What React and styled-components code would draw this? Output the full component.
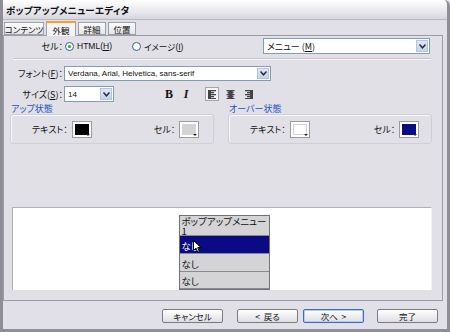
import React from 'react';
import styled, { createGlobalStyle } from 'styled-components';

const GlobalStyle = createGlobalStyle`
  html, body { margin: 0; padding: 0; background: #e1e0e4; }
  body {
    font-family: "Noto Sans CJK JP", "Liberation Sans", sans-serif;
    font-size: 9px;
    font-feature-settings: "palt";
    color: #111;
  }
`;

const Window = styled.div`
  width: 450px;
  height: 332px;
  box-sizing: border-box;
  display: flex;
  flex-direction: column;
  background: #e1e0e6;
  border-left: 3px solid #8e8e96;
  border-right: 3px solid #8e8e96;
  border-bottom: 3px solid #8e8e96;
  border-top-right-radius: 6px;
  overflow: hidden;
`;

const TitleBar = styled.div`
  height: 19px;
  margin: 0 -3px;
  padding-left: 6px;
  display: flex;
  align-items: center;
  font-weight: bold;
  font-size: 9.5px;
  letter-spacing: 0.2px;
  background: linear-gradient(#ffffff, #e4e4ea 70%, #d6d6dc);
  border-bottom: 1px solid #b8b8c0;
  border-top-right-radius: 6px;
`;

const TabRow = styled.div`
  display: flex;
  align-items: flex-end;
  height: 15px;
  padding-left: 1px;
  gap: 2px;
`;

const Tab = styled.div`
  height: ${p => (p.$active ? 15 : 13)}px;
  width: ${p => p.$w}px;
  box-sizing: border-box;
  display: flex;
  align-items: center;
  justify-content: center;
  white-space: nowrap;
  font-size: 8.5px;
  border: 1px solid #a0a0a8;
  border-bottom: ${p => (p.$active ? 'none' : '1px solid #a0a0a8')};
  border-top: ${p => (p.$active ? '2px solid #f2a030' : '1px solid #a0a0a8')};
  background: ${p => (p.$active ? '#f4f4f6' : 'linear-gradient(#fbfbfc, #e6e6ea)')};
  margin-bottom: ${p => (p.$active ? -1 : 0)}px;
  position: relative;
`;

const Panel = styled.div`
  flex: none;
  height: 266px;
  margin-right: 4px;
  box-sizing: border-box;
  border: 1px solid #9c9ca4;
  background: #e1e0e6;
  display: flex;
  flex-direction: column;
`;

const FieldRow = styled.div`
  display: flex;
  align-items: center;
  height: ${p => p.$h}px;
  margin-top: ${p => p.$mt || 0}px;
  padding-right: 12px;
`;

const Label = styled.span`
  width: 59px;
  flex: none;
  text-align: right;
  white-space: nowrap;
  margin-right: 1px;
`;

const Radio = styled.span`
  width: 9px;
  height: 9px;
  box-sizing: border-box;
  border-radius: 50%;
  border: 1px solid #2e5f9e;
  background: #fff;
  display: inline-flex;
  align-items: center;
  justify-content: center;
  margin-left: ${p => p.$ml || 0}px;
  margin-right: 3px;
  &::after {
    content: '';
    width: 3px;
    height: 3px;
    border-radius: 50%;
    background: ${p => (p.$on ? '#2aa02a' : 'transparent')};
  }
`;

const RadioText = styled.span`
  font-family: "Liberation Sans", "Noto Sans CJK JP", sans-serif;
  font-size: 8.5px;
  margin-right: ${p => p.$mr || 0}px;
`;

const Select = styled.div`
  width: ${p => p.$w}px;
  height: ${p => p.$h || 15}px;
  margin-left: ${p => p.$ml || 0}px;
  box-sizing: border-box;
  border: 1px solid #7f9db9;
  background: #fff;
  display: flex;
  align-items: center;
  padding: 1px 1px 1px 3px;
  font-family: ${p => (p.$latin ? '"Liberation Sans", sans-serif' : 'inherit')};
  font-size: ${p => (p.$latin ? '8px' : '9px')};
  span { flex: 1; white-space: nowrap; overflow: hidden; }
`;

const DropButton = styled.div`
  width: 12px;
  height: 100%;
  box-sizing: border-box;
  border: 1px solid #b4c4dc;
  background: linear-gradient(#dfe7f3, #c6d3e8);
  display: flex;
  align-items: center;
  justify-content: center;
`;

const Separator = styled.div`
  height: 0;
  margin: 3px 11px 0 10px;
  border-top: 1px solid #c4c4cc;
  border-bottom: 1px solid #f8f8fa;
`;

const StyleButton = styled.div`
  width: 14px;
  height: 14px;
  margin-left: ${p => p.$ml || 0}px;
  display: flex;
  align-items: center;
  justify-content: center;
  font-family: "Liberation Serif", serif;
  font-size: 12px;
  font-weight: bold;
  font-style: ${p => (p.$italic ? 'italic' : 'normal')};
`;

const AlignButton = styled.div`
  width: 14px;
  height: 14px;
  margin-left: ${p => p.$ml || 0}px;
  box-sizing: border-box;
  display: flex;
  align-items: center;
  justify-content: center;
  border: 1px solid ${p => (p.$pressed ? '#a4a4ac' : 'transparent')};
  background: ${p => (p.$pressed ? '#f4f4f6' : 'transparent')};
`;

const Groups = styled.div`
  display: flex;
  gap: 14px;
  padding: 0 10px 0 6px;
  margin-top: 2px;
`;

const Group = styled.div`
  flex: 1;
  display: flex;
  flex-direction: column;
`;

const Legend = styled.div`
  color: #1a56c4;
  height: 10px;
  line-height: 10px;
  padding-left: 1px;
`;

const GroupBox = styled.div`
  height: 30px;
  box-sizing: border-box;
  border: 1px solid #cfcfd6;
  border-radius: 3px;
  box-shadow: inset 1px 1px 0 #f8f8fa;
  display: flex;
  align-items: center;
  padding-left: ${p => p.$pl}px;
`;

const SwatchLabel = styled.span`
  white-space: nowrap;
  margin-left: ${p => p.$ml || 0}px;
  margin-right: 4px;
`;

const Swatch = styled.div`
  width: 20px;
  height: 17px;
  box-sizing: border-box;
  border: 1px solid #9a9aa2;
  padding: 2px;
  background: #fff;
  position: relative;
  &::before {
    content: '';
    display: block;
    width: 100%;
    height: 100%;
    background: ${p => p.$color};
    box-sizing: border-box;
    border: ${p => (p.$color === '#ffffff' ? '1px solid #d0d0d0' : 'none')};
  }
  &::after {
    content: '';
    position: absolute;
    right: 1px;
    bottom: 1px;
    border-left: 2px solid transparent;
    border-right: 2px solid transparent;
    border-top: 2px solid #222;
  }
`;

const Spacer = styled.div`
  flex: 1;
`;

const Preview = styled.div`
  height: 83px;
  margin: 0 10px 10px 8px;
  box-sizing: border-box;
  background: #fff;
  border-top: 1px solid #b0b0b8;
  border-left: 1px solid #b0b0b8;
  border-right: 1px solid #f4f4f6;
  display: flex;
  justify-content: center;
  padding: 7px 0 0 4px;
`;

const Menu = styled.div`
  width: 91px;
  height: 75px;
  box-sizing: border-box;
  border: 1px solid #707078;
  background: #d4d4d6;
  display: flex;
  flex-direction: column;
  position: relative;
`;

const MenuItem = styled.div`
  height: ${p => p.$h}px;
  box-sizing: border-box;
  padding: ${p => (p.$top ? '0' : '2px')} 2px 0;
  line-height: 10px;
  font-size: 9.5px;
  color: ${p => (p.$hot ? '#fff' : '#111')};
  background: ${p => (p.$hot ? '#0a0a84' : 'transparent')};
  border-bottom: 1px solid #8a8a90;
  display: flex;
  align-items: ${p => (p.$top ? 'flex-start' : 'center')};
  word-break: break-all;
  &:last-child { border-bottom: none; }
`;

const Cursor = styled.svg`
  position: absolute;
  left: 13px;
  top: 24px;
`;

const Footer = styled.div`
  flex: 1;
  display: flex;
  justify-content: flex-end;
  align-items: center;
  padding: 1px 9px 0 0;
  gap: 5px;
`;

const Button = styled.div`
  width: 61px;
  height: 14px;
  margin-left: ${p => p.$ml || 0}px;
  box-sizing: border-box;
  border: 1px solid ${p => (p.$focus ? '#3a68c8' : '#7a7a82')};
  border-radius: 2px;
  background: linear-gradient(#ffffff, #ececf0 60%, #dcdce2);
  box-shadow: ${p => (p.$focus ? 'inset 0 0 0 1px #b8cdf2' : 'none')};
  display: flex;
  align-items: center;
  justify-content: center;
  font-size: 8.5px;
  white-space: pre;
`;

const Chevron = () => (
  <svg width="7" height="5" viewBox="0 0 7 5">
    <path d="M0.5 0.5 L3.5 3.8 L6.5 0.5" fill="none" stroke="#2a2a44" strokeWidth="1.5" />
  </svg>
);

const AlignIcon = ({ mode }) => {
  const rows = [0, 2, 4, 6, 8];
  const widths = [8, 6, 8, 6, 8];
  return (
    <svg width="9" height="9" viewBox="0 0 9 9">
      {rows.map((y, i) => {
        const w = widths[i];
        const x = mode === 'left' ? 0 : mode === 'center' ? (9 - w) / 2 : 9 - w;
        return <rect key={y} x={x} y={y} width={w} height="1.3" fill="#444" />;
      })}
      {mode === 'left' && <rect x="0" y="0" width="3" height="9" fill="#444" />}
      {mode === 'right' && <rect x="6" y="0" width="3" height="9" fill="#444" />}
      {mode === 'center' && <rect x="2.5" y="1" width="4" height="7" fill="#444" />}
    </svg>
  );
};

const App = () => {
  return (
    <>
      <GlobalStyle />
      <Window>
        <TitleBar>ポップアップメニューエディタ</TitleBar>
        <TabRow>
          <Tab $w={40}>コンテンツ</Tab>
          <Tab $w={30} $active>外観</Tab>
          <Tab $w={28}>詳細</Tab>
          <Tab $w={28}>位置</Tab>
        </TabRow>
        <Panel>
          <FieldRow $h={18} $mt={1}>
            <Label>セル：</Label>
            <Radio $ml={1} $on />
            <RadioText $mr={20}>HTML(<u>H</u>)</RadioText>
            <Radio />
            <RadioText>イメージ(<u>I</u>)</RadioText>
            <Spacer />
            <Select $w={167} $h={16}>
              <span>メニュー (<u>M</u>)</span>
              <DropButton><Chevron /></DropButton>
            </Select>
          </FieldRow>
          <Separator />
          <FieldRow $h={15} $mt={6}>
            <Label>フォント(<u>F</u>)：</Label>
            <Select $w={207} $latin>
              <span>Verdana, Arial, Helvetica, sans-serif</span>
              <DropButton><Chevron /></DropButton>
            </Select>
          </FieldRow>
          <FieldRow $h={16} $mt={5}>
            <Label>サイズ(<u>S</u>)：</Label>
            <Select $w={50} $h={16} $latin>
              <span>14</span>
              <DropButton><Chevron /></DropButton>
            </Select>
            <StyleButton $ml={48}>B</StyleButton>
            <StyleButton $ml={3} $italic>I</StyleButton>
            <AlignButton $ml={12} $pressed><AlignIcon mode="left" /></AlignButton>
            <AlignButton $ml={4}><AlignIcon mode="center" /></AlignButton>
            <AlignButton $ml={4}><AlignIcon mode="right" /></AlignButton>
          </FieldRow>
          <Groups>
            <Group>
              <Legend>アップ状態</Legend>
              <GroupBox $pl={21}>
                <SwatchLabel>テキスト：</SwatchLabel>
                <Swatch $color="#000000" />
                <SwatchLabel $ml={62}>セル：</SwatchLabel>
                <Swatch $color="#d4d4d4" />
              </GroupBox>
            </Group>
            <Group>
              <Legend>オーバー状態</Legend>
              <GroupBox $pl={21}>
                <SwatchLabel>テキスト：</SwatchLabel>
                <Swatch $color="#ffffff" />
                <SwatchLabel $ml={64}>セル：</SwatchLabel>
                <Swatch $color="#0a0a84" />
              </GroupBox>
            </Group>
          </Groups>
          <Spacer />
          <Preview>
            <Menu>
              <MenuItem $h={20} $top>ポップアップメニュー1</MenuItem>
              <MenuItem $h={18} $hot>なし</MenuItem>
              <MenuItem $h={18}>なし</MenuItem>
              <MenuItem $h={17}>なし</MenuItem>
              <Cursor width="9" height="13" viewBox="0 0 9 13">
                <path d="M0.5 0.5 L0.5 10.5 L3 8.2 L4.8 12.2 L6.4 11.5 L4.7 7.6 L8 7.6 Z" fill="#fff" stroke="#000" strokeWidth="1" />
              </Cursor>
            </Menu>
          </Preview>
        </Panel>
        <Footer>
          <Button>キャンセル</Button>
          <Button $ml={9}>{'<  戻る'}</Button>
          <Button $focus>{'次へ  >'}</Button>
          <Button $ml={8}>完了</Button>
        </Footer>
      </Window>
    </>
  );
};

export default App;
